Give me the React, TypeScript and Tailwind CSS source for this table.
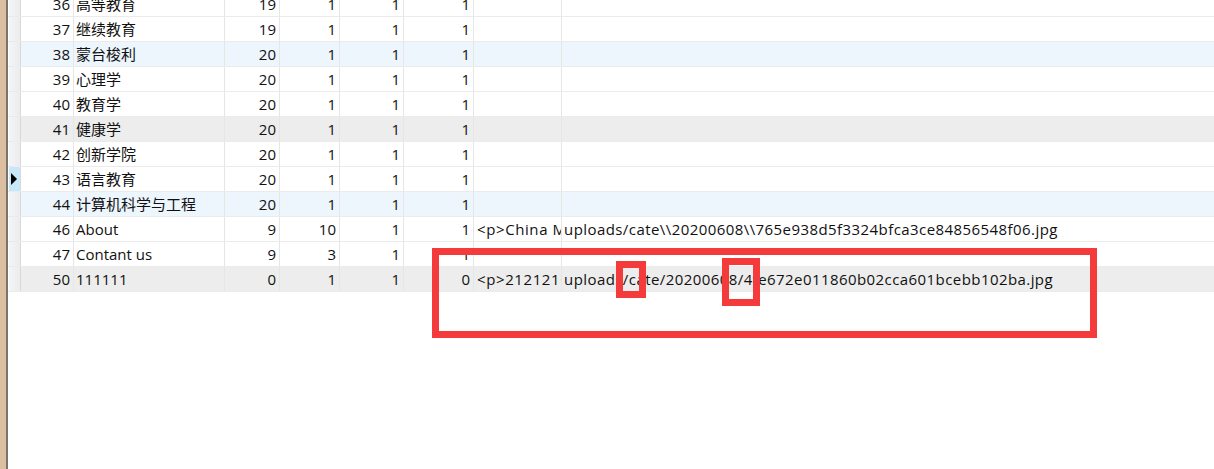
import React from "react";

type Row = {
  id: number;
  name: string;
  a: number;
  b: number;
  c: number;
  d: number;
  e: string;
  f: string;
  bg: string;
  sel?: boolean;
};

const rows: Row[] = [
  { id: 36, name: "高等教育", a: 19, b: 1, c: 1, d: 1, e: "", f: "", bg: "bg-white" },
  { id: 37, name: "继续教育", a: 19, b: 1, c: 1, d: 1, e: "", f: "", bg: "bg-white" },
  { id: 38, name: "蒙台梭利", a: 20, b: 1, c: 1, d: 1, e: "", f: "", bg: "bg-[#edf5fd]" },
  { id: 39, name: "心理学", a: 20, b: 1, c: 1, d: 1, e: "", f: "", bg: "bg-white" },
  { id: 40, name: "教育学", a: 20, b: 1, c: 1, d: 1, e: "", f: "", bg: "bg-white" },
  { id: 41, name: "健康学", a: 20, b: 1, c: 1, d: 1, e: "", f: "", bg: "bg-[#ededed]" },
  { id: 42, name: "创新学院", a: 20, b: 1, c: 1, d: 1, e: "", f: "", bg: "bg-white" },
  { id: 43, name: "语言教育", a: 20, b: 1, c: 1, d: 1, e: "", f: "", bg: "bg-white", sel: true },
  { id: 44, name: "计算机科学与工程", a: 20, b: 1, c: 1, d: 1, e: "", f: "", bg: "bg-[#edf5fd]" },
  {
    id: 46,
    name: "About",
    a: 9,
    b: 10,
    c: 1,
    d: 1,
    e: "<p>China Mobile</p>",
    f: "uploads/cate\\\\20200608\\\\765e938d5f3324bfca3ce84856548f06.jpg",
    bg: "bg-white",
  },
  { id: 47, name: "Contant us", a: 9, b: 3, c: 1, d: 1, e: "", f: "", bg: "bg-white" },
  {
    id: 50,
    name: "111111",
    a: 0,
    b: 1,
    c: 1,
    d: 0,
    e: "<p>212121</p>",
    f: "uploads/cate/20200608/4fe672e011860b02cca601bcebb102ba.jpg",
    bg: "bg-[#ededed]",
  },
];

const cell = "h-full border-r border-[#e6e6e6] flex items-center overflow-hidden whitespace-nowrap shrink-0";

export default function App() {
  return (
    <div
      className="relative w-[1214px] h-[469px] overflow-hidden bg-white flex text-[15px] leading-[24px] text-[#111]"
      style={{ fontFamily: '"Open Sans", "Noto Sans CJK SC", sans-serif' }}
    >
      <div className="w-[6px] h-full bg-[#dcbea1] shrink-0" />
      <div className="w-[2px] h-full bg-[#7a746e] shrink-0" />
      <div className="flex-1 flex flex-col -mt-[8px]">
        {rows.map((r) => (
          <div key={r.id} className={`flex h-[25px] border-b border-[#ebebeb] ${r.bg}`}>
            <div
              className={`w-[13px] h-full shrink-0 border-r border-[#d9d9d9] border-l border-l-white flex items-center ${
                r.sel ? "bg-[#c8e8fa]" : "bg-gradient-to-r from-[#f5f5f7] to-[#ececee]"
              }`}
            >
              {r.sel && (
                <svg width="6" height="12" viewBox="0 0 6 12" className="ml-[2px]">
                  <polygon points="0,0 6,6 0,12" fill="#000" />
                </svg>
              )}
            </div>
            <div className={`${cell} w-[53px] justify-end pr-[3px]`}>{r.id}</div>
            <div className={`${cell} w-[151px] pl-[2px]`}>{r.name}</div>
            <div className={`${cell} w-[55px] justify-end pr-[3px]`}>{r.a}</div>
            <div className={`${cell} w-[60px] justify-end pr-[3px]`}>{r.b}</div>
            <div className={`${cell} w-[64px] justify-end pr-[3px]`}>{r.c}</div>
            <div className={`${cell} w-[70px] justify-end pr-[3px]`}>{r.d}</div>
            <div className={`${cell} w-[88px] pl-[3px] tracking-[0.6px]`}>{r.e}</div>
            <div className="h-full flex-1 flex items-center overflow-hidden whitespace-nowrap pl-[2px] tracking-[0.43px]">
              {r.f}
            </div>
          </div>
        ))}
      </div>

      <div className="absolute left-[432px] top-[248px] w-[665px] h-[90px] border-[7px] border-[#f43a3a]" />
      <div className="absolute left-[616px] top-[261px] w-[30px] h-[37px] border-[7px] border-[#f43a3a]" />
      <div className="absolute left-[722px] top-[258px] w-[38px] h-[48px] border-[7px] border-[#f43a3a]" />
    </div>
  );
}
